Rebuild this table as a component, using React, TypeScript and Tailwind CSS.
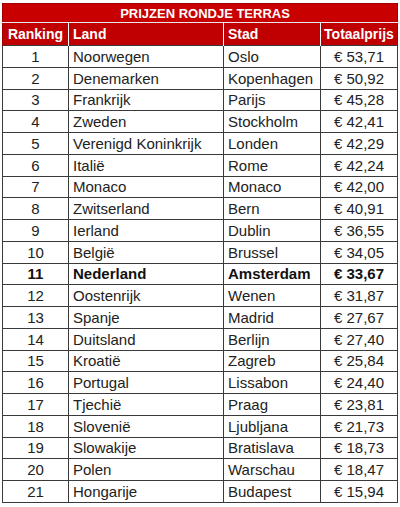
const rows: [number, string, string, string][] = [
  [1, 'Noorwegen', 'Oslo', '53,71'],
  [2, 'Denemarken', 'Kopenhagen', '50,92'],
  [3, 'Frankrijk', 'Parijs', '45,28'],
  [4, 'Zweden', 'Stockholm', '42,41'],
  [5, 'Verenigd Koninkrijk', 'Londen', '42,29'],
  [6, 'Italië', 'Rome', '42,24'],
  [7, 'Monaco', 'Monaco', '42,00'],
  [8, 'Zwitserland', 'Bern', '40,91'],
  [9, 'Ierland', 'Dublin', '36,55'],
  [10, 'België', 'Brussel', '34,05'],
  [11, 'Nederland', 'Amsterdam', '33,67'],
  [12, 'Oostenrijk', 'Wenen', '31,87'],
  [13, 'Spanje', 'Madrid', '27,67'],
  [14, 'Duitsland', 'Berlijn', '27,40'],
  [15, 'Kroatië', 'Zagreb', '25,84'],
  [16, 'Portugal', 'Lissabon', '24,40'],
  [17, 'Tjechië', 'Praag', '23,81'],
  [18, 'Slovenië', 'Ljubljana', '21,73'],
  [19, 'Slowakije', 'Bratislava', '18,73'],
  [20, 'Polen', 'Warschau', '18,47'],
  [21, 'Hongarije', 'Budapest', '15,94'],
];

export default function App() {
  return (
    <div className="w-[400px] h-[507px] bg-white pt-[3px] pl-[2px] font-['Liberation_Sans',Arial,sans-serif]">
      <table className="border-collapse table-fixed w-[395px] text-[15px] text-[#222]">
        <colgroup>
          <col className="w-[66px]" />
          <col className="w-[155px]" />
          <col className="w-[97px]" />
          <col className="w-[77px]" />
        </colgroup>
        <thead>
          <tr className="h-[19px]">
            <th
              colSpan={4}
              className="bg-[#c80000] text-white text-[13px] font-bold text-center pl-[10px] leading-none border border-[#a00000] border-b-[#e8e8e8]"
            >
              PRIJZEN RONDJE TERRAS
            </th>
          </tr>
          <tr className="h-[23px] bg-[#c00000] text-white text-[14px] font-bold leading-none">
            <th className="text-center border-l border-[#a00000]">Ranking</th>
            <th className="text-left pl-[4px] border-l border-white">Land</th>
            <th className="text-left pl-[4px] border-l border-white">Stad</th>
            <th className="text-center border-l border-white border-r border-r-[#a00000]">Totaalprijs</th>
          </tr>
        </thead>
        <tbody>
          {rows.map(([rank, land, stad, prijs]) => (
            <tr key={rank} className={`h-[21.75px] leading-none ${rank === 11 ? 'font-bold text-[#111]' : ''}`}>
              <td className="text-center border border-[#3a3a3a]">{rank}</td>
              <td className="pl-[4px] border border-[#3a3a3a]">{land}</td>
              <td className="pl-[4px] border border-[#3a3a3a]">{stad}</td>
              <td className="text-center border border-[#3a3a3a]">€ {prijs}</td>
            </tr>
          ))}
        </tbody>
      </table>
    </div>
  );
}
